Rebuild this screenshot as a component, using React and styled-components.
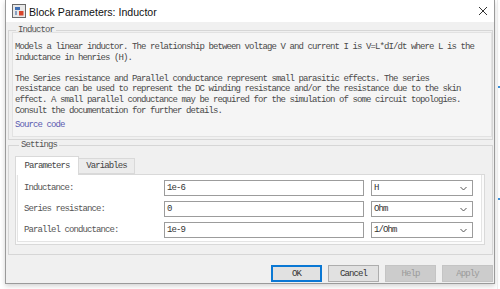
import React from "react";
import styled, { createGlobalStyle } from "styled-components";

const Global = createGlobalStyle`
  html, body {
    margin: 0;
    padding: 0;
    background: #ffffff;
  }
  body {
    width: 500px;
    height: 289px;
    overflow: hidden;
  }
`;

const mono = `"Liberation Mono", "DejaVu Sans Mono", monospace`;

const Page = styled.div`
  display: flex;
  width: 500px;
  height: 289px;
  background: #ffffff;
`;

const Window = styled.div`
  margin-left: 5px;
  width: 488px;
  height: 283px;
  border: 1px solid #9a9a9a;
  border-top: none;
  background: #f0f0f0;
  display: flex;
  flex-direction: column;
  box-shadow: 0 2px 5px rgba(0, 0, 0, 0.18);
`;

const TitleBar = styled.div`
  height: 22px;
  flex-shrink: 0;
  background: #ffffff;
  display: flex;
  align-items: center;
  padding-left: 6px;
  padding-right: 6px;
  gap: 3px;
  font-family: "Liberation Sans", Arial, sans-serif;
  font-size: 10.6px;
  color: #111;
`;

const TitleText = styled.span`
  flex: 1;
  padding-top: 1px;
`;

const Side = styled.div`
  flex: 1;
  display: flex;
  flex-direction: column;
  border-left: 1px solid #ececec;
  margin-left: 2px;
`;

const BlueMark = styled.div`
  height: 2px;
  margin-top: ${(p) => p.top}px;
  background: #3b8fd9;
`;

const Group = styled.fieldset`
  margin: ${(p) => p.mt}px 1px 0 2px;
  padding: 0 ${(p) => p.pr}px ${(p) => p.pb}px ${(p) => p.pl}px;
  border: 1px solid #d6d6d6;
  min-width: 0;
`;

const Legend = styled.legend`
  margin-left: 4px;
  padding: 0 2px;
  font-family: ${mono};
  font-size: 9px;
  letter-spacing: -0.9px;
  line-height: 6px;
  color: #555;
`;

const Description = styled.div`
  margin-top: -1px;
  background: #f5f5f5;
  border: 1px solid #e2e2e2;
  padding: 9px 0 5px 2px;
  font-family: ${mono};
  font-size: 9px;
  letter-spacing: -0.9px;
  line-height: 10.6px;
  color: #4a4a4a;
  white-space: pre;
`;

const Line = styled.div`
  height: 10.6px;
`;

const SourceLink = styled.div`
  margin-top: 3px;
  height: 12px;
  line-height: 12px;
  color: #5b5bb0;
`;

const Tabs = styled.div`
  display: flex;
  align-items: flex-end;
  margin-top: 8px;
  position: relative;
  z-index: 1;
`;

const Tab = styled.div`
  height: ${(p) => (p.active ? 19 : 16)}px;
  width: ${(p) => p.w}px;
  box-sizing: border-box;
  border: 1px solid #d9d9d9;
  border-bottom: ${(p) => (p.active ? "none" : "1px solid #d9d9d9")};
  border-left: ${(p) => (p.active ? "1px solid #d9d9d9" : "none")};
  background: ${(p) => (p.active ? "#ffffff" : "#ececec")};
  display: flex;
  align-items: center;
  justify-content: center;
  font-family: ${mono};
  font-size: 9px;
  letter-spacing: -0.9px;
  color: #444;
  margin-bottom: ${(p) => (p.active ? -1 : 0)}px;
`;

const TabPanel = styled.div`
  border: 1px solid #d9d9d9;
  background: #fbfbfb;
  padding: 0 2px 2px 1px;
`;

const FormBox = styled.div`
  background: #ffffff;
  border: 1px solid #e4e4e4;
  border-top: none;
  padding: 5px 6px 3px 6px;
  display: flex;
  flex-direction: column;
  gap: 5px;
`;

const Row = styled.div`
  display: flex;
  align-items: center;
  height: 16px;
`;

const Label = styled.div`
  width: 140px;
  font-family: ${mono};
  font-size: 9px;
  letter-spacing: -0.9px;
  color: #555;
`;

const Input = styled.div`
  width: 200px;
  height: 16px;
  box-sizing: border-box;
  border: 1px solid #9c9c9c;
  background: #fff;
  padding-left: 2px;
  display: flex;
  align-items: center;
  font-family: ${mono};
  font-size: 9px;
  letter-spacing: -0.9px;
  color: #333;
`;

const Select = styled(Input)`
  width: 102px;
  margin-left: 7px;
  justify-content: space-between;
  padding-right: 5px;
`;

const Buttons = styled.div`
  display: flex;
  justify-content: flex-end;
  gap: 6px;
  margin-top: auto;
  margin-bottom: 1px;
  padding-right: 1px;
`;

const Button = styled.div`
  width: 51px;
  height: 17px;
  box-sizing: border-box;
  display: flex;
  align-items: center;
  justify-content: center;
  font-family: ${mono};
  font-size: 9px;
  letter-spacing: -0.9px;
  background: ${(p) => (p.disabled ? "#cccccc" : "#e1e1e1")};
  border: ${(p) =>
    p.primary ? "2px solid #0a78d4" : p.disabled ? "1px solid #c4c4c4" : "1px solid #adadad"};
  color: ${(p) => (p.disabled ? "#9a9a9a" : "#333")};
`;

const BlockIcon = () => (
  <svg width="14" height="14" viewBox="0 0 14 14">
    <rect x="0.5" y="0.5" width="13" height="13" fill="#e8e8e8" stroke="#6a6a6a" />
    <path d="M3 3h5v3H3z" fill="#3f6fb5" />
    <path d="M3 7h2v4H3z" fill="#8aa0c0" />
    <rect x="7" y="7" width="4.5" height="4.5" fill="#d9452b" />
  </svg>
);

const CloseIcon = () => (
  <svg width="10" height="10" viewBox="0 0 10 10">
    <path d="M1 1L9 9M9 1L1 9" stroke="#333" strokeWidth="1" />
  </svg>
);

const Chevron = () => (
  <svg width="7" height="5" viewBox="0 0 7 5">
    <path d="M0.5 1L3.5 4L6.5 1" fill="none" stroke="#555" strokeWidth="1" />
  </svg>
);

const rows = [
  { label: "Inductance:", value: "1e-6", unit: "H" },
  { label: "Series resistance:", value: "0", unit: "Ohm" },
  { label: "Parallel conductance:", value: "1e-9", unit: "1/Ohm" },
];

export default function App() {
  return (
    <Page>
      <Global />
      <Window>
        <TitleBar>
          <BlockIcon />
          <TitleText>Block Parameters: Inductor</TitleText>
          <CloseIcon />
        </TitleBar>

        <Group mt={5} pl={3} pr={0} pb={2}>
          <Legend>Inductor</Legend>
          <Description>
            <Line>Models a linear inductor. The relationship between voltage V and current I is V=L*dI/dt where L is the</Line>
            <Line>inductance in henries (H).</Line>
            <Line> </Line>
            <Line>The Series resistance and Parallel conductance represent small parasitic effects. The series</Line>
            <Line>resistance can be used to represent the DC winding resistance and/or the resistance due to the skin</Line>
            <Line>effect. A small parallel conductance may be required for the simulation of some circuit topologies.</Line>
            <Line>Consult the documentation for further details.</Line>
            <SourceLink>Source code</SourceLink>
          </Description>
        </Group>

        <Group mt={2} pl={6} pr={7} pb={9}>
          <Legend>Settings</Legend>
          <Tabs>
            <Tab active w={64}>Parameters</Tab>
            <Tab w={56}>Variables</Tab>
          </Tabs>
          <TabPanel>
            <FormBox>
              {rows.map((r) => (
                <Row key={r.label}>
                  <Label>{r.label}</Label>
                  <Input>{r.value}</Input>
                  <Select>
                    <span>{r.unit}</span>
                    <Chevron />
                  </Select>
                </Row>
              ))}
            </FormBox>
          </TabPanel>
        </Group>

        <Buttons>
          <Button primary>OK</Button>
          <Button>Cancel</Button>
          <Button disabled>Help</Button>
          <Button disabled>Apply</Button>
        </Buttons>
      </Window>
      <Side>
        <BlueMark top={86} />
        <BlueMark top={110} />
      </Side>
    </Page>
  );
}
